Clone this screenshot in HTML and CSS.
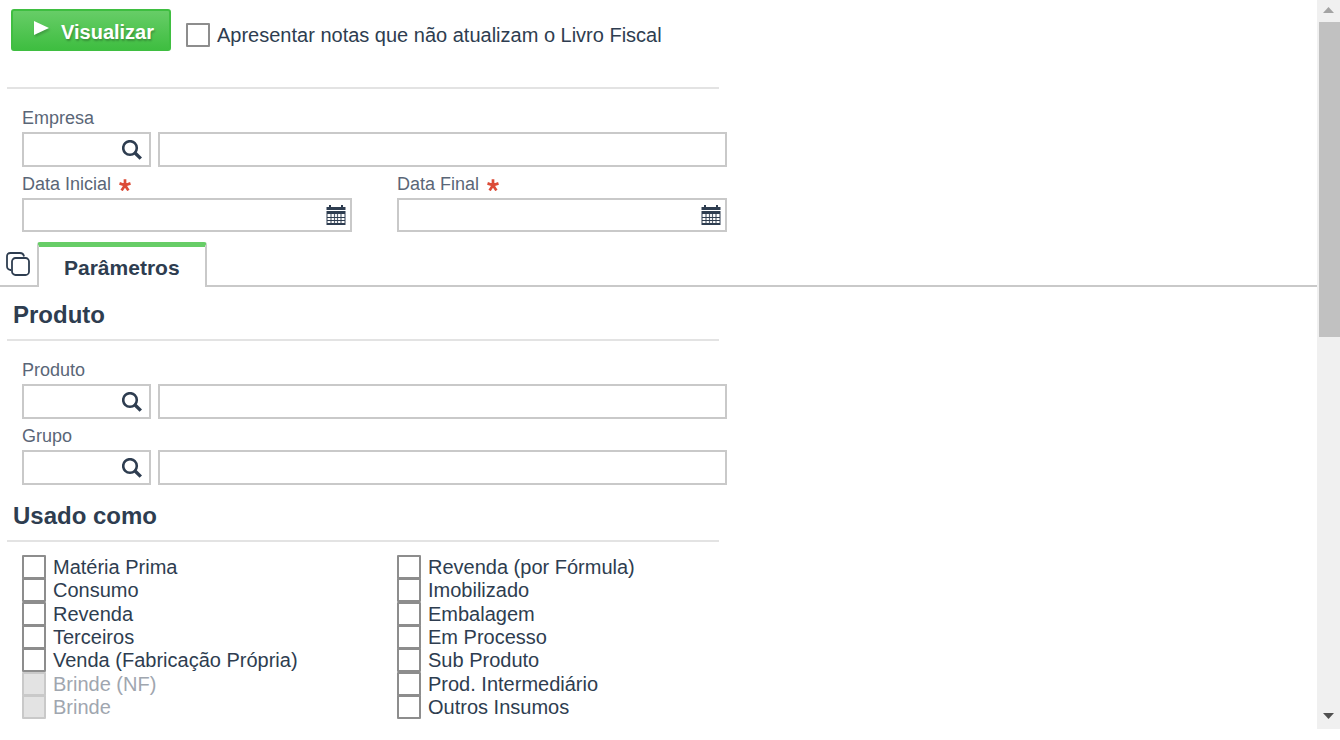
FILE: index.html
```html
<!DOCTYPE html>
<html lang="pt-BR">
<head>
  <meta charset="UTF-8">
  <meta name="viewport" content="width=device-width, initial-scale=1">
  <title>Livro Fiscal</title>
  <link rel="stylesheet" href="styles.css">
</head>
<body>
  <svg class="sprite" aria-hidden="true">
    <symbol id="icon-search" viewBox="0 0 20 20">
      <circle cx="8" cy="8" r="6.8" fill="none" stroke="currentColor" stroke-width="2.6"/>
      <path d="M12.300 12.300L18.800 18.600" stroke="currentColor" stroke-width="3.4"/>
    </symbol>
    <symbol id="icon-calendar" viewBox="0 0 20 20">
      <path d="M3 0h2v2h10V0h2v2h2.500v3H.5V2H3zM.5 6h19v14H.5z" fill="currentColor"/>
      <path d="M1.500 9h17v3h-17zM1.500 13h17v2h-17zM1.500 16h17v2h-17z" fill="#fff"/>
      <path d="M5 9v9M8.500 9v9M11.500 9v9M15 9v9" stroke="currentColor" stroke-width="1.200" opacity=".8"/>
    </symbol>
    <symbol id="icon-required" viewBox="0 0 12 12">
      <path d="M6 6.200V.3M6 6.200L.5 4.400M6 6.200L11.500 4.400M6 6.200L2.600 11.400M6 6.200L9.400 11.400" fill="none" stroke="currentColor" stroke-width="2.700"/>
    </symbol>
  </svg>

  <main class="page">
    <form>
      <div class="toolbar">
        <button type="button" class="btn-view">
          <svg viewBox="0 0 15 14" aria-hidden="true"><path d="M0 0L15 7L0 14z" fill="#fff"/></svg>
          Visualizar
        </button>
        <label class="check"><input type="checkbox"> Apresentar notas que não atualizam o Livro Fiscal</label>
      </div>

      <div class="fields">
        <label for="empresa">Empresa</label>
        <div class="lookup">
          <div class="box">
            <input type="text" id="empresa">
            <button type="button" aria-label="Pesquisar empresa"><svg><use href="#icon-search"/></svg></button>
          </div>
          <div class="box"><input type="text" aria-label="Nome da empresa"></div>
        </div>
        <div class="dates">
          <div>
            <label for="data-inicial">Data Inicial <svg class="required"><use href="#icon-required"/></svg></label>
            <div class="box">
              <input type="text" id="data-inicial" required>
              <button type="button" aria-label="Calendário"><svg><use href="#icon-calendar"/></svg></button>
            </div>
          </div>
          <div>
            <label for="data-final">Data Final <svg class="required"><use href="#icon-required"/></svg></label>
            <div class="box">
              <input type="text" id="data-final" required>
              <button type="button" aria-label="Calendário"><svg><use href="#icon-calendar"/></svg></button>
            </div>
          </div>
        </div>
      </div>

      <div class="tabs">
        <button type="button" class="tab-all" aria-label="Todas as abas">
          <svg viewBox="0 0 24 24" fill="none" stroke="currentColor" stroke-width="1.800" aria-hidden="true">
            <rect x="6" y="6" width="17" height="17" rx="3.5"/>
            <path d="M5 18H4.500Q1 17.500 1 14V4.500Q1 1 4.500 1H14Q17.500 1 18 4.500"/>
          </svg>
        </button>
        <button type="button" class="tab">Parâmetros</button>
      </div>

      <h2>Produto</h2>
      <div class="fields">
        <label for="produto">Produto</label>
        <div class="lookup">
          <div class="box">
            <input type="text" id="produto">
            <button type="button" aria-label="Pesquisar produto"><svg><use href="#icon-search"/></svg></button>
          </div>
          <div class="box"><input type="text" aria-label="Nome do produto"></div>
        </div>
        <label for="grupo">Grupo</label>
        <div class="lookup">
          <div class="box">
            <input type="text" id="grupo">
            <button type="button" aria-label="Pesquisar grupo"><svg><use href="#icon-search"/></svg></button>
          </div>
          <div class="box"><input type="text" aria-label="Nome do grupo"></div>
        </div>
      </div>

      <h2>Usado como</h2>
      <div class="options">
        <label class="check"><input type="checkbox"> Matéria Prima</label>
        <label class="check"><input type="checkbox"> Consumo</label>
        <label class="check"><input type="checkbox"> Revenda</label>
        <label class="check"><input type="checkbox"> Terceiros</label>
        <label class="check"><input type="checkbox"> Venda (Fabricação Própria)</label>
        <label class="check disabled"><input type="checkbox" disabled> Brinde (NF)</label>
        <label class="check disabled"><input type="checkbox" disabled> Brinde</label>
        <label class="check"><input type="checkbox"> Revenda (por Fórmula)</label>
        <label class="check"><input type="checkbox"> Imobilizado</label>
        <label class="check"><input type="checkbox"> Embalagem</label>
        <label class="check"><input type="checkbox"> Em Processo</label>
        <label class="check"><input type="checkbox"> Sub Produto</label>
        <label class="check"><input type="checkbox"> Prod. Intermediário</label>
        <label class="check"><input type="checkbox"> Outros Insumos</label>
      </div>
    </form>
  </main>

  <div class="scrollbar" aria-hidden="true">
    <svg viewBox="0 0 11 6"><path d="M0 6L5.500 0L11 6z" fill="#a3a3a3"/></svg>
    <div class="track"><div class="thumb"></div></div>
    <svg viewBox="0 0 11 6"><path d="M0 0L5.500 6L11 0z" fill="#505050"/></svg>
  </div>
</body>
</html>
```
FILE: styles.css
```css
* {
  box-sizing: border-box;
}

body {
  display: flex;
  min-height: 100vh;
  margin: 0;
  padding-bottom: 11px;
  background: #fff;
  color: #2e3d50;
  font-family: "Liberation Sans", Arial, sans-serif;
  font-size: 20px;
}

button {
  padding: 0;
  border: none;
  background: none;
  color: inherit;
  font: inherit;
  cursor: pointer;
}

svg {
  display: block;
}

.sprite {
  display: none;
}

.page {
  flex: 1;
}

/* toolbar */
.toolbar {
  display: flex;
  align-items: flex-start;
  gap: 15px;
  max-width: 712px;
  height: 80px;
  margin: 9px 0 0 7px;
  padding-left: 4px;
  border-bottom: 2px solid #e3e3e3;
}

.btn-view {
  display: flex;
  gap: 12px;
  width: 160px;
  height: 42px;
  padding: 10px 0 0 21px;
  border: 2px solid #3fbe41;
  border-radius: 3px;
  background: linear-gradient(#67cd67, #3fbe41);
  color: #fff;
  font-weight: bold;
  line-height: 23px;
  text-shadow: 1px 2px 2px rgba(0, 0, 0, 0.25);
}

.btn-view svg {
  width: 15px;
  height: 14px;
  filter: drop-shadow(1px 2px 1px rgba(0, 0, 0, 0.2));
}

.toolbar .check {
  margin-top: 14px;
}

/* fields */
.fields {
  max-width: 727px;
  padding: 12px 0 0 22px;
}

.fields label {
  display: flex;
  align-items: center;
  gap: 8px;
  height: 31px;
  padding-top: 4px;
  color: #5a6677;
  font-size: 18px;
}

.required {
  width: 12px;
  height: 12px;
  color: #dc4b37;
}

.lookup {
  display: grid;
  grid-template-columns: 129px 1fr;
  gap: 7px;
}

.dates {
  display: grid;
  grid-template-columns: 1fr 1fr;
  gap: 45px;
}

.box {
  display: flex;
  align-items: center;
  height: 35px;
  border: 2px solid #c9c9c9;
}

.box input {
  flex: 1;
  min-width: 0;
  height: 100%;
  padding: 0 6px;
  border: none;
  background: none;
  color: inherit;
  font: inherit;
  outline: none;
}

.box svg {
  width: 20px;
  height: 20px;
}

.box button {
  margin-right: 7px;
}

.dates .box {
  height: 34px;
}

.dates .box button {
  margin-right: 4px;
}

/* tabs */
.tabs {
  display: flex;
  height: 45px;
  margin-top: 10px;
  border-bottom: 2px solid #c9c9c9;
}

.tab-all {
  width: 37px;
  padding: 1px 0 0 6px;
}

.tab-all svg {
  width: 24px;
  height: 24px;
}

.tab {
  height: 45px;
  padding: 2px 25px 0;
  border: 2px solid #c9c9c9;
  border-top: 5px solid #67cd67;
  border-bottom: none;
  border-radius: 3px 3px 0 0;
  background: #fff;
  font-size: 21px;
  font-weight: bold;
}

h2 {
  max-width: 712px;
  height: 54px;
  margin: 0 0 0 7px;
  padding-left: 6px;
  border-bottom: 2px solid #e3e3e3;
  font-size: 24px;
  line-height: 56px;
}

.fields + h2 {
  margin-top: 3px;
}

/* checkboxes */
.check {
  display: flex;
  align-items: center;
  gap: 7px;
  line-height: 24px;
}

.check input {
  appearance: none;
  flex: none;
  width: 24px;
  height: 24px;
  margin: 0;
  border: 2px solid #8d8d8d;
  border-radius: 1px;
  background: #fff;
}

.options {
  display: grid;
  grid-template-rows: repeat(7, minmax(0, 1fr));
  grid-template-columns: 1fr 1fr;
  grid-auto-flow: column;
  column-gap: 45px;
  max-width: 727px;
  height: 177px;
  padding: 13px 0 0 22px;
}

.disabled {
  color: #a0a6af;
}

.disabled input {
  border-color: #c9c9c9;
  background: #e3e3e3;
}

/* scrollbar */
.scrollbar {
  display: flex;
  flex-direction: column;
  align-items: center;
  width: 23px;
  padding: 7px 0 10px;
  background: #f0f0f0;
}

.scrollbar svg {
  width: 11px;
  height: 6px;
}

.track {
  flex: 1;
  align-self: stretch;
  margin: 9px 0 6px;
  padding-left: 2px;
}

.thumb {
  height: 46%;
  background: #c1c1c1;
}
```
